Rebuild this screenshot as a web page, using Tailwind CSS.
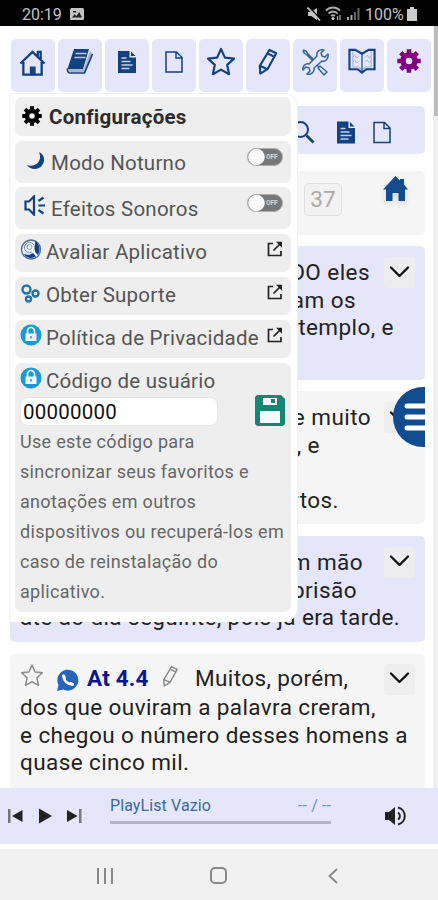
<!DOCTYPE html>
<html lang="pt-BR">
<head>
<meta charset="utf-8">
<title>Configurações</title>
<script src="https://cdn.jsdelivr.net/npm/@tailwindcss/browser@4"></script>
</head>
<body class="w-[438px] h-[900px] overflow-hidden bg-white font-[Roboto,'Liberation_Sans',sans-serif] text-[#222]">
<svg class="hidden">
  <symbol id="gear" viewBox="0 0 24 24"><circle cx="12" cy="12" r="6" fill="none" stroke="currentColor" stroke-width="5.400"/><path fill="none" stroke="currentColor" stroke-width="4.600" d="M12 .3v4M12 19.700v4M.3 12h4M19.700 12h4M3.700 3.700l3 3M17.300 17.300l3 3M3.700 20.300l3-3M17.300 6.700l3-3"/></symbol>
  <symbol id="filetext" viewBox="0 0 18 22"><path fill="#124280" d="M0 0h11.500v6.500H18V22H0z"/><path fill="#124280" d="M13 0.500 17.500 5H13z"/><path stroke="#c5cfe8" stroke-width="1.300" d="M3.500 7h5M3.500 10.500h9M3.500 14h11M3.500 17.500h8"/></symbol>
  <symbol id="file" viewBox="0 0 18 22"><path fill="none" stroke="currentColor" stroke-width="1.500" d="M1 1h10.500L17 6.500V21H1zM11 1v6h6"/></symbol>
  <symbol id="chev" viewBox="0 0 20 12"><path fill="none" stroke="#111" stroke-width="2.300" stroke-linecap="round" stroke-linejoin="round" d="m1.500 1.500 8.500 8.500 8.500-8.500"/></symbol>
  <symbol id="ext" viewBox="0 0 16 16"><path fill="none" stroke="#222" stroke-width="1.700" d="M6 2.500H1.500v12H14V10M6.500 9.500 13 3"/><path fill="#222" d="M9 .8h6v6z"/></symbol>
  <symbol id="star" viewBox="0 0 30 30"><path fill="none" stroke="currentColor" stroke-linejoin="round" d="m15 2 3.900 8.600 9.100 1-6.800 6.300 1.900 9.300-8.100-4.600-8.100 4.600 1.900-9.300L2 11.600l9.100-1z"/></symbol>
  <symbol id="pencil" viewBox="0 0 20 28"><path fill="none" stroke="currentColor" stroke-linejoin="round" d="M11.500 2 18.500 5.500 9.500 22 2 26.500 1.500 18.500zM9.800 5.700l7 3.500M1.500 18.500l8 3.500"/></symbol>
  <symbol id="lock" viewBox="0 0 22 22"><circle cx="11" cy="11" r="10.500" fill="#1b98d5"/><path fill="none" stroke="#eef7fc" stroke-width="1.700" d="M7.500 10V7a3.500 3.500 0 0 1 7 0v3"/><path fill="#eef7fc" d="M5.500 9.500h11V17h-11z"/><path stroke="#1b98d5" stroke-width="1.500" d="M11 12v2.500"/></symbol>
  <symbol id="toggle" viewBox="0 0 36 18"><rect x=".5" y=".5" width="35" height="17" rx="8.500" fill="#777" stroke="#aaa"/><circle cx="9.500" cy="9" r="8.300" fill="#fafafa"/></symbol>
</svg>

<header class="flex h-[26px] items-center bg-black text-[#c4c4c4]">
  <span class="ml-[22px] mt-[3px] w-[40px] text-[16px]">20:19</span>
  <svg class="ml-2 mt-[2px] h-[12px] w-[14px]" viewBox="0 0 14 12"><rect width="14" height="12" rx="1.500" fill="#c4c4c4"/><path fill="#222" d="m2 9.500 2.500-3.300 2 1.800 2.700-4L12 9.500zM3 3h3v1.500H3z"/></svg>
  <svg class="ml-[223px] mt-px h-[14px] w-[14px]" viewBox="0 0 14 14"><path fill="#c4c4c4" d="M1 5h3l6-4v12L4 9H1z"/><path stroke="#000" stroke-width="1.500" d="m2 0 12 12.500"/><path stroke="#c4c4c4" stroke-width="1.700" d="m.5.500 12.500 13"/></svg>
  <svg class="ml-[4px] mt-px h-[15px] w-[18px]" viewBox="0 0 18 15"><path fill="none" stroke="#aaa" stroke-width="1.800" d="M1 4.500c4-4 10-4 14 0M3.500 7.500c3-2.600 6-2.600 9 0M6 10c1.500-1.200 2.500-1.200 4 0"/><circle cx="8" cy="12.500" r="1.500" fill="#ccc"/><path stroke="#aaa" stroke-width="1.300" d="M12.500 10v4m2.500-5v5"/></svg>
  <svg class="ml-[4px] mt-[2px] h-[12px] w-[13px]" viewBox="0 0 13 12"><path stroke="#aaa" stroke-width="2" d="M1 12V9m3.500 3V7"/><path stroke="#666" stroke-width="2" d="M8 12V4m3.500 8V0"/></svg>
  <span class="ml-[5px] mt-[3px] w-[39px] whitespace-nowrap text-[16px]">100%</span>
  <svg class="ml-[3px] mt-px h-[14px] w-[10px]" viewBox="0 0 10 14"><path fill="#ccc" d="M3 0h4v2h3v12H0V2h3z"/></svg>
</header>

<main class="relative h-[762px] overflow-hidden">
  <nav class="ml-[11px] mt-[13px] grid h-[53px] w-[420px] grid-cols-9 gap-[3px] text-[#124280]">
    <div class="flex justify-center rounded-[5px] bg-[#e6e6fa] pt-[10px]"><svg class="-ml-px h-[28px] w-[27px]" viewBox="0 0 28 28" fill="none" stroke="currentColor" stroke-width="2.400"><path d="m1.500 14.500 12.500-12 12.500 12M4.500 13v13h19V13M19.500 7.500V2.500h3v8"/><path fill="currentColor" stroke-width="1.500" d="M12 18.500h4.500V26H12z"/></svg></div>
    <div class="flex justify-center rounded-[5px] bg-[#e6e6fa] pt-[10px]"><svg class="h-[26px] w-[28px]" viewBox="0 0 28 26"><path fill="#124280" d="M8 0h15L17 20H1.500z"/><path stroke="#b9c9e6" stroke-width="1.500" d="M9.500 4.500h11M8.500 8.500h11"/><path fill="#a9b6d0" d="M2 20h15.500L24 2l2 2-7 19H3z"/><path fill="none" stroke="#124280" stroke-width="1.700" d="M1.500 19.500C1 22 2 24 4 24h14.500L26.500 5"/></svg></div>
    <div class="flex justify-center rounded-[5px] bg-[#e6e6fa] pt-[12px]"><svg class="h-[22px] w-[18px]"><use href="#filetext"/></svg></div>
    <div class="flex justify-center rounded-[5px] bg-[#e6e6fa] pt-[12px]"><svg class="h-[22px] w-[18px]"><use href="#file"/></svg></div>
    <div class="flex justify-center rounded-[5px] bg-[#e6e6fa] pt-[8px]"><svg class="h-[30px] w-[30px] stroke-[2.200]"><use href="#star"/></svg></div>
    <div class="flex justify-center rounded-[5px] bg-[#e6e6fa] pt-[9px]"><svg class="h-[27px] w-[20px] stroke-[2.200]"><use href="#pencil"/></svg></div>
    <div class="flex justify-center rounded-[5px] bg-[#e6e6fa] pt-[9px]"><svg class="-ml-px h-[28px] w-[28px]" viewBox="0 0 28 28" fill="none" stroke="#376695" stroke-width="1.500" stroke-linejoin="round"><path d="m2 2 3 1 2 3 6 6M2 2l1 3 3 2 6 6M16 17l2 2 1-1 7 6-3 3-6-7 1-1-2-2"/><path fill="#e6e6fa" d="m8 16 8-8c-1-4 2-7 7-6l-3 3 1 3 3 1 3-3c1 5-3 8-6 7l-8 7c1 4-3 7-7 6l3-3-1-3-3-1-3 3c-1-4 3-7 6-6z"/></svg></div>
    <div class="flex justify-center rounded-[5px] bg-[#e6e6fa] pt-[8px]"><svg class="-ml-px h-[28px] w-[28px]" viewBox="0 0 29 28" fill="none"><path fill="#e6e6fa" stroke="#124280" stroke-width="2.200" d="M1.500 2.500h6l7 4 7-4h6v20h-8.500l-4.500 3.500-4.500-3.500H1.500z"/><path stroke="#124280" stroke-width="1.200" d="M14.500 6v19"/><path stroke="#124280" stroke-width="1.300" d="M5 2.500V20h6l3.500 3L18 20h6V2.500" opacity=".25"/><path stroke="#9db2d3" d="m5 10 2-2 2 3 2-2M5 15l2-2 2 3 2-2m7-4 2-2 2 3 2-2m-6 6 2-2 2 3 2-2"/></svg></div>
    <div class="flex justify-center rounded-[5px] bg-[#e6e6fa] pt-[10px] text-[#800080]"><svg class="h-[24px] w-[24px]"><use href="#gear"/></svg></div>
  </nav>

  <div class="ml-[10px] mt-[14px] flex w-[415px] flex-col text-[22.500px] leading-[27.500px] tracking-[0.440px]">
    <section class="flex h-[48px] items-center rounded-[5px] bg-[#e6e6fa] pl-[284px] text-[#124280]">
      <svg class="mt-[5px] h-[24px] w-[24px]" viewBox="0 0 24 24" fill="none" stroke="currentColor" stroke-width="2"><circle cx="6.500" cy="8.500" r="7.500"/><path stroke-width="2.800" d="m12.500 14.500 7 7"/></svg>
      <svg class="ml-[19px] mt-[4px] h-[23px] w-[18px]"><use href="#filetext"/></svg>
      <svg class="ml-[18px] mt-[4px] h-[23px] w-[18px]"><use href="#file"/></svg>
    </section>
    <section class="mt-[17px] flex h-[64px] rounded-[5px] bg-[#f5f5f5]">
      <div class="ml-[294px] mt-[12px] flex h-[33px] w-[38px] items-center justify-center rounded-[5px] border border-[#dedede] bg-[#f2f2f2] tracking-normal text-[#aaa]">37</div>
      <svg class="ml-[41px] mt-[5px] h-[26px] w-[25px] drop-shadow-md" viewBox="0 0 25 26"><path fill="#124b8e" d="M12.500 0 17 4.500V3h4v5.500l4 5h-3V25h-6.500v-8h-6v8H3V13.500H0z"/></svg>
    </section>
    <section class="mt-[11px] flex h-[134px] justify-between rounded-[5px] bg-[#e6e6fa] pr-[10px] pt-[11px]">
      <p class="w-[360px] pt-[2px] text-right"><span class="block whitespace-nowrap">DO eles</span><span class="block whitespace-nowrap pr-[14px]">am os</span><span class="-mr-[24px] block whitespace-nowrap">templo, e</span></p>
      <div class="flex h-[31px] w-[31px] items-center justify-center rounded bg-[#ededf0]"><svg class="-mt-[2px] h-[12px] w-[21px]"><use href="#chev"/></svg></div>
    </section>
    <section class="mt-[11px] flex h-[133px] justify-between rounded-[5px] bg-[#f5f5f5] pr-[10px] pt-[11px]">
      <p class="w-[361px] pt-[2px] text-right"><span class="block whitespace-nowrap">e muito</span><span class="block whitespace-nowrap pr-[51px]">, e</span><span class="block whitespace-nowrap pr-[32px] pt-[28px]">rtos.</span></p>
      <div class="flex h-[31px] w-[31px] items-center justify-center rounded bg-[#eee]"><svg class="-mt-[2px] h-[12px] w-[21px]"><use href="#chev"/></svg></div>
    </section>
    <section class="mt-[12px] flex h-[106px] justify-between rounded-[5px] bg-[#e6e6fa] pr-[10px] pt-[11px]">
      <p class="w-[353px] whitespace-nowrap pl-[10px] pt-[2px]"><span class="block text-right">em mão</span><span class="block pr-[6px] text-right">prisão</span><span class="block tracking-[0.380px]">até ao dia seguinte, pois já era tarde.</span></p>
      <div class="flex h-[31px] w-[31px] items-center justify-center rounded bg-[#ededf0]"><svg class="-mt-[4px] h-[12px] w-[21px]"><use href="#chev"/></svg></div>
    </section>
    <section class="mt-[12px] flex h-[140px] justify-between rounded-[5px] bg-[#f5f5f5] pr-[10px] pt-[10px]">
      <div class="w-[360px] whitespace-nowrap pl-[10px]">
        <div class="flex h-[30px] items-center">
          <svg class="-mt-[7px] h-[25px] w-[24px] stroke-[1.800] text-[#888]"><use href="#star"/></svg>
          <svg class="ml-[12px] mt-[3px] h-[23px] w-[23px]" viewBox="0 0 23 23"><path fill="#2864b9" d="M1 22 2.500 16A10.500 10.500 0 1 1 7 20.500z"/><path fill="none" stroke="#fff" stroke-width="2.600" stroke-linecap="round" d="M7.500 7c.5 5 4 8.500 9 8.500"/><path stroke="#fff" stroke-width="3" stroke-linecap="round" d="m7.500 7 .8 1.500m6.500 6 1.700.8"/></svg>
          <b class="ml-[8px] w-[64px] font-bold tracking-[0.200px] text-[#0a1590]">At 4.4</b>
          <svg class="ml-[11px] -mt-[7px] h-[22px] w-[17px] stroke-[1.800] text-[#888]"><use href="#pencil"/></svg>
          <span class="ml-[16px] tracking-[0.380px]">Muitos, porém,</span>
        </div>
        <span class="block tracking-[0.400px]">dos que ouviram a palavra creram,</span><span class="block">e chegou o número desses homens a</span><span class="block tracking-[0.400px]">quase cinco mil.</span>
      </div>
      <div class="flex h-[31px] w-[31px] shrink-0 items-center justify-center rounded bg-[#eee]"><svg class="-mt-[3px] h-[12px] w-[21px]"><use href="#chev"/></svg></div>
    </section>
  </div>

  <div class="absolute right-0 top-0 h-full w-[5px] bg-[#f0f0f0]"><div class="ml-px h-[90px] bg-[#bcbcbc]"></div></div>
  <svg class="absolute left-[393px] top-[361px] h-[60px] w-[32px]" viewBox="0 0 32 60"><path fill="#124b8e" d="M32 0v60h-2a30 30 0 0 1 0-60z"/><path stroke="#fff" stroke-width="5" stroke-linecap="round" d="M14 19h20M14 30h20M14 41h20"/></svg>

  <aside class="absolute left-[9px] top-[67px] flex h-[529px] w-[289px] flex-col rounded-[14px] rounded-l-[3px] border border-[#f1f1f1] border-b-white bg-white px-[5px] pt-[3px] text-[20.500px] leading-[24px] tracking-[0.240px] text-[#555] *:w-[276px] *:rounded-[7px] *:bg-[#eee] *:whitespace-nowrap">
    <div class="flex h-[39px] items-center pl-[7px] text-[#2b2b2b]"><svg class="-mt-[2px] h-[20px] w-[20px] text-black"><use href="#gear"/></svg><b class="ml-[7px] font-bold">Configurações</b></div>
    <div class="mt-[5px] flex h-[42px] items-center pl-[12px]"><svg class="-mt-[4px] h-[17px] w-[18px]" viewBox="0 0 18 17"><path fill="#124280" d="M12 0c9 4 5 17-4 17-4 0-7-2-8-4 8 3 16-4 12-13z"/></svg><span class="ml-[6px] mt-[2px] w-[196px]">Modo Noturno</span>
      <div class="relative -mt-[11px]"><svg class="h-[18px] w-[36px]"><use href="#toggle"/></svg><span class="absolute left-[19px] top-[5px] text-[6.500px] font-bold leading-[8px] tracking-normal text-[#ddd]">OFF</span></div></div>
    <div class="mt-[4px] flex h-[42px] items-center pl-[9px]"><svg class="-mt-[5px] h-[21px] w-[22px]" viewBox="0 0 22 21" fill="none" stroke="#124280" stroke-width="2.200"><path d="M1.500 6.500H5l5-5v18l-5-5H1.500zM14.500 6l5-3.500M14.500 10.500H21M14.500 15l5 3.500"/></svg><span class="ml-[5px] mt-px w-[196px]">Efeitos Sonoros</span>
      <div class="relative -mt-[11px]"><svg class="h-[18px] w-[36px]"><use href="#toggle"/></svg><span class="absolute left-[19px] top-[5px] text-[6.500px] font-bold leading-[8px] tracking-normal text-[#ddd]">OFF</span></div></div>
    <div class="mt-[5px] flex h-[38px] items-center pl-[5px]"><svg class="-mt-[7px] h-[22px] w-[22px]" viewBox="0 0 22 22" fill="none"><circle cx="11" cy="10.500" r="9.500" fill="#e8edf5" stroke="#4d6b99" stroke-width="1.300"/><path fill="#124280" d="M15 2c7 5 5 14 0 16-4 2-9 1-11-3l5 1 6-3z"/><circle cx="9.500" cy="8.500" r="5" fill="#fff" stroke="#6580a5"/><circle cx="9.500" cy="8" r="2.500" stroke="#8499b8"/><path stroke="#fff" stroke-width="2" d="m12 11 5 6"/></svg><span class="ml-[4px] -mt-[2px] w-[221px]">Avaliar Aplicativo</span><svg class="-mt-[8px] h-[16px] w-[16px]"><use href="#ext"/></svg></div>
    <div class="mt-[5px] flex h-[38px] items-center pl-[6px]"><svg class="-mt-[6px] h-[19px] w-[19px]" viewBox="0 0 19 19" fill="none" stroke="#2174aa" stroke-width="2.400"><circle cx="5.500" cy="5.500" r="4"/><circle cx="14.500" cy="9.500" r="3"/><circle cx="7.500" cy="15" r="2.500"/></svg><span class="ml-[6px] -mt-[2px] w-[221px]">Obter Suporte</span><svg class="-mt-[8px] h-[16px] w-[16px]"><use href="#ext"/></svg></div>
    <div class="mt-[5px] flex h-[38px] items-center pl-[5px]"><svg class="-mt-[8px] h-[22px] w-[22px]"><use href="#lock"/></svg><span class="ml-[4px] -mt-[2px] w-[221px]">Política de Privacidade</span><svg class="-mt-[8px] h-[16px] w-[16px]"><use href="#ext"/></svg></div>
    <div class="mt-[5px] h-[249px] pl-[5px] pt-[4px]">
      <div class="flex h-[28px] items-center"><svg class="-mt-[6px] h-[22px] w-[22px]"><use href="#lock"/></svg><span class="ml-[4px]">Código de usuário</span></div>
      <div class="flex items-center"><div class="mt-[2px] flex h-[29px] w-[198px] items-center rounded-[8px] border border-[#e6e6e6] bg-white pl-[2px] text-[#111]">00000000</div>
        <svg class="ml-[37px] h-[31px] w-[30px]" viewBox="0 0 30 31"><path fill="#168572" d="M2 0h24l4 4v25l-2 2H2l-2-2V2z"/><path fill="#fff" d="M8 3h14v7H8zM5 16h20v12H5z"/><path fill="#168572" d="M16 4h4v4h-4z"/></svg></div>
      <p class="pt-px text-[18px] leading-[30px] tracking-[0.320px] text-[#666]">Use este código para<br>sincronizar seus favoritos e<br>anotações em outros<br>dispositivos ou recuperá-los em<br>caso de reinstalação do<br>aplicativo.</p>
    </div>
  </aside>
</main>

<section class="flex h-[56px] items-center bg-[#e6e6fa]">
  <svg class="ml-[8px] h-[16px] w-[15px]" viewBox="0 0 15 16"><path fill="#777" d="M0 1h2.500v14H0z"/><path fill="#222" d="M14.500 2v12L4 8z"/></svg>
  <svg class="ml-[16px] h-[16px] w-[14px]" viewBox="0 0 14 16"><path fill="#222" d="M0 .5 13 8 0 15.500z"/></svg>
  <svg class="ml-[14px] h-[16px] w-[15px]" viewBox="0 0 15 16"><path fill="#777" d="M12 1h2.500v14H12z"/><path fill="#222" d="M0 2v12L10.500 8z"/></svg>
  <div class="-mt-[14px] ml-[28px] w-[221px] text-[16px] leading-[22px] tracking-[0.100px] text-[#386a9d]">
    <div class="flex justify-between"><span>PlayList Vazio</span><span class="text-[#6c8fb8]">-- / --</span></div>
    <div class="mt-[4px] h-[3px] bg-[#b4b4c8]"></div>
  </div>
  <svg class="ml-[53px] h-[20px] w-[23px]" viewBox="0 0 23 20"><path fill="#222" d="M1 6h4l6-5v18l-6-5H1z"/><path fill="none" stroke="#222" stroke-width="2" d="M14 6.500c2.500 1.500 2.500 5.500 0 7M14 1.500c9 2 9 15 0 17"/></svg>
</section>
<footer class="mt-[5px] flex h-[51px] items-center bg-[#f1f1f1] pt-[2px]">
  <div class="ml-[97px] flex h-[16px] w-[16px] justify-between *:w-[2px] *:bg-[#888]"><i></i><i></i><i></i></div>
  <div class="ml-[97px] h-[17px] w-[17px] rounded-[5px] border-2 border-[#888]"></div>
  <svg class="ml-[101px] h-[16px] w-[10px]" viewBox="0 0 10 16" fill="none" stroke="#888" stroke-width="1.800"><path d="M9 1 1.500 8 9 15"/></svg>
</footer>
</body>
</html>
